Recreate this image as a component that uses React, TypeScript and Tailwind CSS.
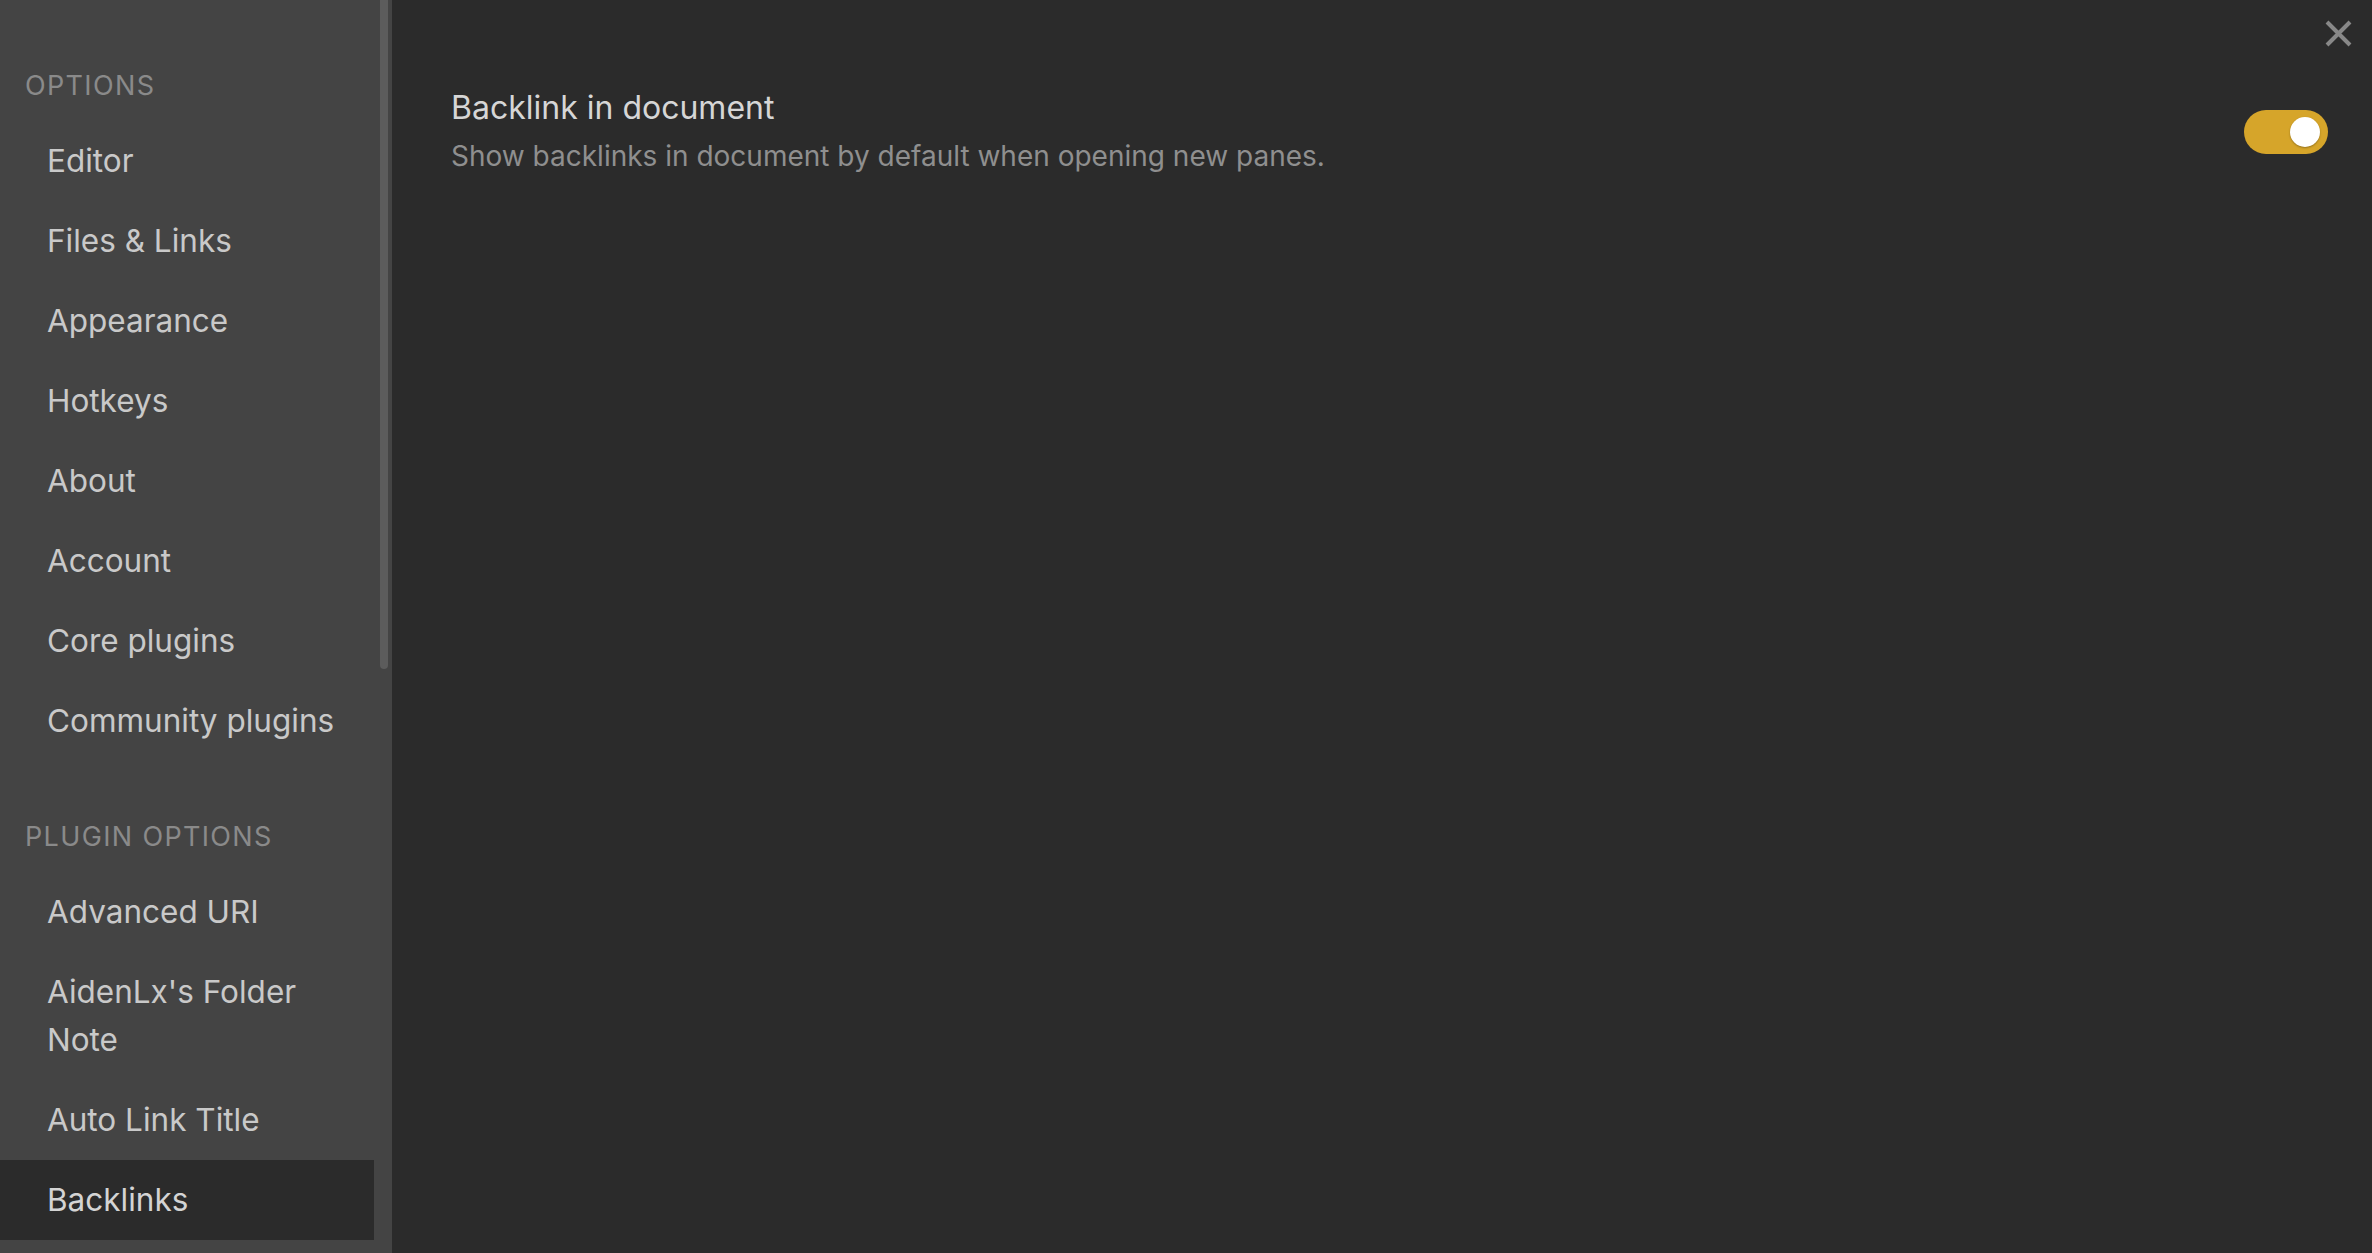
import { useState } from 'react'

type NavItem = { label: string }

const optionItems: NavItem[] = [
  { label: 'Editor' },
  { label: 'Files & Links' },
  { label: 'Appearance' },
  { label: 'Hotkeys' },
  { label: 'About' },
  { label: 'Account' },
  { label: 'Core plugins' },
  { label: 'Community plugins' },
]

const pluginItems: NavItem[] = [
  { label: 'Advanced URI' },
  { label: "AidenLx's Folder Note" },
  { label: 'Auto Link Title' },
  { label: 'Backlinks' },
]

function NavSection({ title, items, active, first }: { title: string; items: NavItem[]; active: string; first?: boolean }) {
  return (
    <div className={first ? 'pt-[66px]' : 'pt-[56px]'}>
      <div className="pl-[25px] text-[27px] leading-[40px] tracking-[0.05em] text-[#8a8a8a] uppercase mb-[15px]">
        {title}
      </div>
      {items.map((item) => (
        <div
          key={item.label}
          className={
            'w-[374px] py-[16px] pl-[47px] pr-[16px] text-[31.5px] leading-[48px] ' +
            (item.label === active ? 'bg-[#2b2b2b] text-[#d4d4d4]' : 'text-[#c9c9c9]')
          }
        >
          {item.label}
        </div>
      ))}
    </div>
  )
}

export default function App() {
  const [enabled, setEnabled] = useState(true)

  return (
    <div className="flex h-[1253px] w-full overflow-hidden bg-[#2b2b2b] font-['Inter','Noto_Sans',sans-serif]">
      <aside className="relative h-full w-[392px] shrink-0 bg-[#444444]">
        <div className="absolute right-[4px] top-0 h-[669px] w-[8px] rounded-b-[4px] bg-[#5c5c5c]" />
        <NavSection title="Options" items={optionItems} active="Backlinks" first />
        <NavSection title="Plugin options" items={pluginItems} active="Backlinks" />
      </aside>

      <main className="relative flex-1 pl-[59px] pr-[44px] pt-[88px]">
        <button className="absolute right-[20px] top-[20px] text-[#888888]" aria-label="Close">
          <svg width="27" height="27" viewBox="0 0 27 27" fill="none" stroke="currentColor" strokeWidth="4">
            <path d="M2 2 L25 25 M25 2 L2 25" />
          </svg>
        </button>

        <div className="flex items-center justify-between">
          <div>
            <div className="text-[32px] leading-[40px] text-[#d6d6d6]">Backlink in document</div>
            <div className="mt-[8px] text-[28px] leading-[40px] text-[#8f8f8f]">
              Show backlinks in document by default when opening new panes.
            </div>
          </div>
          <button
            onClick={() => setEnabled(!enabled)}
            className={
              'relative h-[44px] w-[84px] rounded-full ' + (enabled ? 'bg-[#d6a52a]' : 'bg-[#555555]')
            }
          >
            <span
              className={
                'absolute top-[7px] h-[30px] w-[30px] rounded-full bg-white shadow-[0_1px_2px_rgba(0,0,0,0.3)] ' +
                (enabled ? 'left-[46px]' : 'left-[8px]')
              }
            />
          </button>
        </div>
      </main>
    </div>
  )
}
